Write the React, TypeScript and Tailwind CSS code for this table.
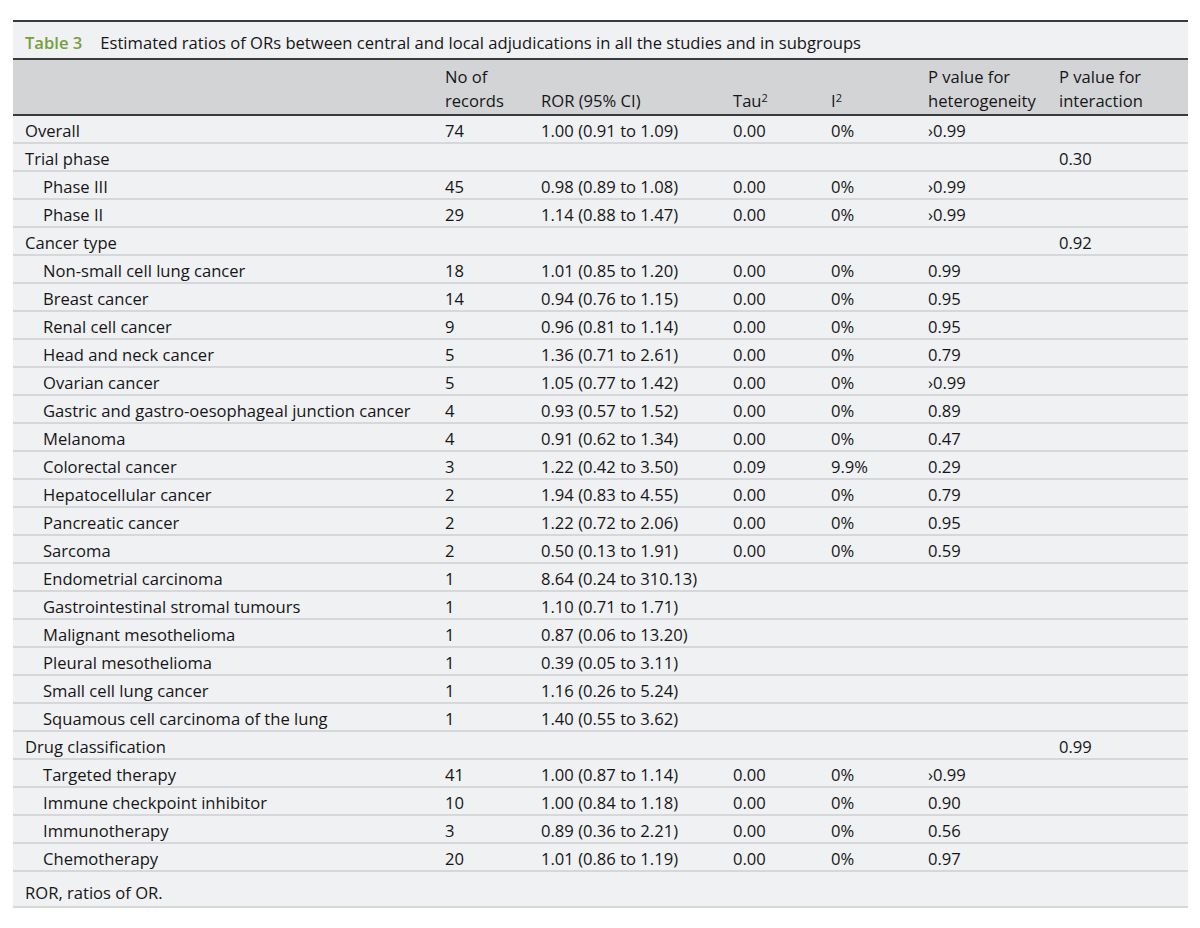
const COLS = 'grid grid-cols-[420px_96px_192px_98px_97px_131px_140px]'

type Row = {
  label: string
  sub?: boolean
  n?: string
  ror?: string
  tau?: string
  i2?: string
  phet?: string
  pint?: string
}

const rows: Row[] = [
  { label: 'Overall', n: '74', ror: '1.00 (0.91 to 1.09)', tau: '0.00', i2: '0%', phet: '›0.99' },
  { label: 'Trial phase', pint: '0.30' },
  { label: 'Phase III', sub: true, n: '45', ror: '0.98 (0.89 to 1.08)', tau: '0.00', i2: '0%', phet: '›0.99' },
  { label: 'Phase II', sub: true, n: '29', ror: '1.14 (0.88 to 1.47)', tau: '0.00', i2: '0%', phet: '›0.99' },
  { label: 'Cancer type', pint: '0.92' },
  { label: 'Non-small cell lung cancer', sub: true, n: '18', ror: '1.01 (0.85 to 1.20)', tau: '0.00', i2: '0%', phet: '0.99' },
  { label: 'Breast cancer', sub: true, n: '14', ror: '0.94 (0.76 to 1.15)', tau: '0.00', i2: '0%', phet: '0.95' },
  { label: 'Renal cell cancer', sub: true, n: '9', ror: '0.96 (0.81 to 1.14)', tau: '0.00', i2: '0%', phet: '0.95' },
  { label: 'Head and neck cancer', sub: true, n: '5', ror: '1.36 (0.71 to 2.61)', tau: '0.00', i2: '0%', phet: '0.79' },
  { label: 'Ovarian cancer', sub: true, n: '5', ror: '1.05 (0.77 to 1.42)', tau: '0.00', i2: '0%', phet: '›0.99' },
  { label: 'Gastric and gastro-oesophageal junction cancer', sub: true, n: '4', ror: '0.93 (0.57 to 1.52)', tau: '0.00', i2: '0%', phet: '0.89' },
  { label: 'Melanoma', sub: true, n: '4', ror: '0.91 (0.62 to 1.34)', tau: '0.00', i2: '0%', phet: '0.47' },
  { label: 'Colorectal cancer', sub: true, n: '3', ror: '1.22 (0.42 to 3.50)', tau: '0.09', i2: '9.9%', phet: '0.29' },
  { label: 'Hepatocellular cancer', sub: true, n: '2', ror: '1.94 (0.83 to 4.55)', tau: '0.00', i2: '0%', phet: '0.79' },
  { label: 'Pancreatic cancer', sub: true, n: '2', ror: '1.22 (0.72 to 2.06)', tau: '0.00', i2: '0%', phet: '0.95' },
  { label: 'Sarcoma', sub: true, n: '2', ror: '0.50 (0.13 to 1.91)', tau: '0.00', i2: '0%', phet: '0.59' },
  { label: 'Endometrial carcinoma', sub: true, n: '1', ror: '8.64 (0.24 to 310.13)' },
  { label: 'Gastrointestinal stromal tumours', sub: true, n: '1', ror: '1.10 (0.71 to 1.71)' },
  { label: 'Malignant mesothelioma', sub: true, n: '1', ror: '0.87 (0.06 to 13.20)' },
  { label: 'Pleural mesothelioma', sub: true, n: '1', ror: '0.39 (0.05 to 3.11)' },
  { label: 'Small cell lung cancer', sub: true, n: '1', ror: '1.16 (0.26 to 5.24)' },
  { label: 'Squamous cell carcinoma of the lung', sub: true, n: '1', ror: '1.40 (0.55 to 3.62)' },
  { label: 'Drug classification', pint: '0.99' },
  { label: 'Targeted therapy', sub: true, n: '41', ror: '1.00 (0.87 to 1.14)', tau: '0.00', i2: '0%', phet: '›0.99' },
  { label: 'Immune checkpoint inhibitor', sub: true, n: '10', ror: '1.00 (0.84 to 1.18)', tau: '0.00', i2: '0%', phet: '0.90' },
  { label: 'Immunotherapy', sub: true, n: '3', ror: '0.89 (0.36 to 2.21)', tau: '0.00', i2: '0%', phet: '0.56' },
  { label: 'Chemotherapy', sub: true, n: '20', ror: '1.01 (0.86 to 1.19)', tau: '0.00', i2: '0%', phet: '0.97' },
]

export default function App() {
  return (
    <div className="min-h-[928px] bg-white pt-[20px] pl-[13px] font-['Open_Sans',sans-serif] text-[16.6px] text-[#161616]">
      <div className="w-[1175px] bg-[#f0f1f3]">
        {/* caption */}
        <div className="flex h-[38px] items-center gap-[18px] border-t-2 border-[#3a3a3a] px-[12px] pt-[7px]">
          <span className="font-semibold text-[#74a03c]">Table 3</span>
          <span>Estimated ratios of ORs between central and local adjudications in all the studies and in subgroups</span>
        </div>

        {/* header */}
        <div className={`${COLS} h-[58px] items-end border-y-2 border-[#3a3a3a] bg-[#d3d4d6] pb-[1px] leading-[24px]`}>
          <div />
          <div className="pl-[12px]">
            No of
            <br />
            records
          </div>
          <div className="pl-[12px]">ROR (95% CI)</div>
          <div className="pl-[12px]">
            Tau<sup className="text-[11px]">2</sup>
          </div>
          <div className="pl-[12px]">
            I<sup className="text-[11px]">2</sup>
          </div>
          <div className="pl-[12px]">
            P value for
            <br />
            heterogeneity
          </div>
          <div className="pl-[12px]">
            P value for
            <br />
            interaction
          </div>
        </div>

        {rows.map((r) => (
          <div key={r.label} className={`${COLS} h-[28px] items-center border-b-2 border-[#d6d7d9] pt-[3px]`}>
            <div className={r.sub ? 'pl-[30px]' : 'pl-[12px]'}>{r.label}</div>
            <div className="pl-[12px]">{r.n}</div>
            <div className="pl-[12px]">{r.ror}</div>
            <div className="pl-[12px]">{r.tau}</div>
            <div className="pl-[12px]">{r.i2}</div>
            <div className="pl-[12px]">{r.phet}</div>
            <div className="pl-[12px]">{r.pint}</div>
          </div>
        ))}

        {/* footnote */}
        <div className="flex h-[36px] items-center border-b-2 border-[#d6d7d9] px-[12px] pt-[8px]">ROR, ratios of OR.</div>
      </div>
    </div>
  )
}
